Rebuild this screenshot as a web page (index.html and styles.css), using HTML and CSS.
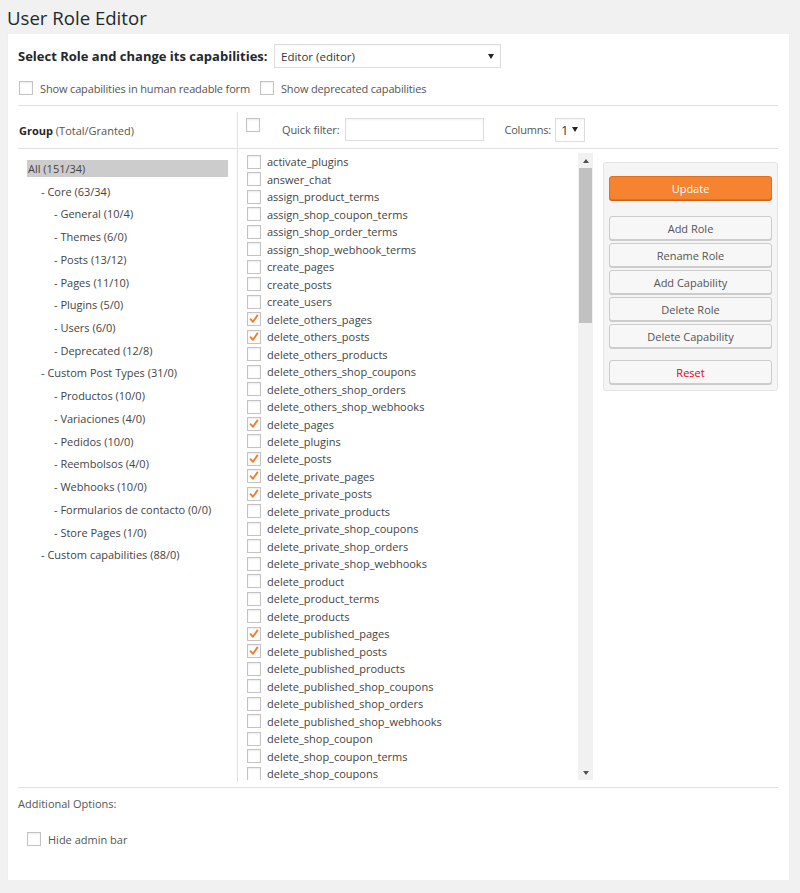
FILE: index.html
```html
<!DOCTYPE html>
<html>
<head>
<meta charset="utf-8">
<title>User Role Editor</title>
<link rel="stylesheet" href="styles.css">
</head>
<body>
<h1 class="title">User Role Editor</h1>
<div class="panel">
  <div class="role-row">
    <span class="role-label">Select Role and change its capabilities:</span>
    <div class="select role-select"><span>Editor (editor)</span><i class="caret"></i></div>
  </div>
  <div class="opts-row">
    <label class="opt"><span class="cb"></span>Show capabilities in human readable form</label>
    <label class="opt"><span class="cb"></span>Show deprecated capabilities</label>
  </div>
  <div class="grid">
    <div class="hdr-left"><div class="hdr-left-in"><b>Group</b>&nbsp;(Total/Granted)</div></div>
    <div class="hdr-right">
      <span class="cb hdr-cb"></span>
      <span class="qf-label">Quick filter:</span>
      <div class="input"></div>
      <span class="col-label">Columns:</span>
      <div class="select col-select"><span>1</span><i class="caret"></i></div>
    </div>
    <div class="body-left">
      <ul class="groups">
        <li class="g0 active">All (151/34)</li>
        <li class="g1">- Core (63/34)</li>
        <li class="g2">- General (10/4)</li>
        <li class="g2">- Themes (6/0)</li>
        <li class="g2">- Posts (13/12)</li>
        <li class="g2">- Pages (11/10)</li>
        <li class="g2">- Plugins (5/0)</li>
        <li class="g2">- Users (6/0)</li>
        <li class="g2">- Deprecated (12/8)</li>
        <li class="g1">- Custom Post Types (31/0)</li>
        <li class="g2">- Productos (10/0)</li>
        <li class="g2">- Variaciones (4/0)</li>
        <li class="g2">- Pedidos (10/0)</li>
        <li class="g2">- Reembolsos (4/0)</li>
        <li class="g2">- Webhooks (10/0)</li>
        <li class="g2">- Formularios de contacto (0/0)</li>
        <li class="g2">- Store Pages (1/0)</li>
        <li class="g1">- Custom capabilities (88/0)</li>
      </ul>
    </div>
    <div class="body-right">
      <div class="caps-box">
        <ul class="caps">
          <li><span class="cb"></span>activate_plugins</li>
          <li><span class="cb"></span>answer_chat</li>
          <li><span class="cb"></span>assign_product_terms</li>
          <li><span class="cb"></span>assign_shop_coupon_terms</li>
          <li><span class="cb"></span>assign_shop_order_terms</li>
          <li><span class="cb"></span>assign_shop_webhook_terms</li>
          <li><span class="cb"></span>create_pages</li>
          <li><span class="cb"></span>create_posts</li>
          <li><span class="cb"></span>create_users</li>
          <li><span class="cb on"><svg viewBox="0 0 14 14"><path d="M3 7.2 L5.8 10.2 L11 2.8"/></svg></span>delete_others_pages</li>
          <li><span class="cb on"><svg viewBox="0 0 14 14"><path d="M3 7.2 L5.8 10.2 L11 2.8"/></svg></span>delete_others_posts</li>
          <li><span class="cb"></span>delete_others_products</li>
          <li><span class="cb"></span>delete_others_shop_coupons</li>
          <li><span class="cb"></span>delete_others_shop_orders</li>
          <li><span class="cb"></span>delete_others_shop_webhooks</li>
          <li><span class="cb on"><svg viewBox="0 0 14 14"><path d="M3 7.2 L5.8 10.2 L11 2.8"/></svg></span>delete_pages</li>
          <li><span class="cb"></span>delete_plugins</li>
          <li><span class="cb on"><svg viewBox="0 0 14 14"><path d="M3 7.2 L5.8 10.2 L11 2.8"/></svg></span>delete_posts</li>
          <li><span class="cb on"><svg viewBox="0 0 14 14"><path d="M3 7.2 L5.8 10.2 L11 2.8"/></svg></span>delete_private_pages</li>
          <li><span class="cb on"><svg viewBox="0 0 14 14"><path d="M3 7.2 L5.8 10.2 L11 2.8"/></svg></span>delete_private_posts</li>
          <li><span class="cb"></span>delete_private_products</li>
          <li><span class="cb"></span>delete_private_shop_coupons</li>
          <li><span class="cb"></span>delete_private_shop_orders</li>
          <li><span class="cb"></span>delete_private_shop_webhooks</li>
          <li><span class="cb"></span>delete_product</li>
          <li><span class="cb"></span>delete_product_terms</li>
          <li><span class="cb"></span>delete_products</li>
          <li><span class="cb on"><svg viewBox="0 0 14 14"><path d="M3 7.2 L5.8 10.2 L11 2.8"/></svg></span>delete_published_pages</li>
          <li><span class="cb on"><svg viewBox="0 0 14 14"><path d="M3 7.2 L5.8 10.2 L11 2.8"/></svg></span>delete_published_posts</li>
          <li><span class="cb"></span>delete_published_products</li>
          <li><span class="cb"></span>delete_published_shop_coupons</li>
          <li><span class="cb"></span>delete_published_shop_orders</li>
          <li><span class="cb"></span>delete_published_shop_webhooks</li>
          <li><span class="cb"></span>delete_shop_coupon</li>
          <li><span class="cb"></span>delete_shop_coupon_terms</li>
          <li><span class="cb"></span>delete_shop_coupons</li>
        </ul>
        <div class="scrollbar">
          <div class="sb-btn"><i class="tri-up"></i></div>
          <div class="sb-track"><div class="sb-thumb"></div></div>
          <div class="sb-btn"><i class="tri-down"></i></div>
        </div>
      </div>
      <div class="actions">
        <button class="btn primary">Update</button>
        <div class="btn-group">
          <button class="btn">Add Role</button>
          <button class="btn">Rename Role</button>
          <button class="btn">Add Capability</button>
          <button class="btn">Delete Role</button>
          <button class="btn">Delete Capability</button>
        </div>
        <button class="btn reset">Reset</button>
      </div>
    </div>
  </div>
  <div class="additional">
    <div class="add-title">Additional Options:</div>
    <label class="opt add-opt"><span class="cb"></span>Hide admin bar</label>
  </div>
</div>
</body>
</html>
```
FILE: styles.css
```css
html, body {
  margin: 0;
  padding: 0;
  background: #f1f1f1;
}
body {
  font-family: "Open Sans", "Noto Sans", sans-serif;
  font-size: 11px;
  color: #444;
}
.title {
  margin: 0;
  height: 34px;
  line-height: 36px;
  padding-left: 7px;
  font-size: 18.6px;
  font-weight: 400;
  color: #23282d;
}
.panel {
  width: 781px;
  height: 846px;
  margin-left: 8px;
  box-sizing: border-box;
  background: #fff;
  padding: 10px 11px 0 10px;
  box-shadow: 0 1px 1px rgba(0,0,0,0.06);
}
.role-row {
  display: flex;
  align-items: center;
  height: 24px;
}
.role-label {
  font-weight: 700;
  font-size: 13px;
  color: #23282d;
  width: 256px;
  white-space: nowrap;
}
.select {
  box-sizing: border-box;
  height: 24px;
  border: 1px solid #ddd;
  background: #fff;
  display: flex;
  align-items: center;
  justify-content: space-between;
  color: #32373c;
  box-shadow: inset 0 1px 2px rgba(0,0,0,0.04);
}
.role-select {
  width: 227px;
  padding: 0 6px 0 6px;
  font-size: 11.5px;
}
.caret {
  width: 0;
  height: 0;
  border-left: 3px solid transparent;
  border-right: 3px solid transparent;
  border-top: 5px solid #222;
}
.opts-row {
  display: flex;
  align-items: center;
  height: 14px;
  margin-top: 13px;
  padding-left: 1px;
  letter-spacing: -0.15px;
}
.opt {
  display: flex;
  align-items: center;
  color: #555;
}
.opt + .opt {
  margin-left: 10px;
}
.cb {
  box-sizing: border-box;
  width: 14px;
  height: 14px;
  border: 1px solid #c3c3c3;
  background: #fff;
  box-shadow: inset 0 1px 2px rgba(0,0,0,0.08);
  flex: none;
  display: inline-flex;
  align-items: center;
  justify-content: center;
  margin-right: 7px;
}
.cb svg {
  width: 14px;
  height: 14px;
}
.cb svg path {
  fill: none;
  stroke: #f07d2c;
  stroke-width: 2.2;
  stroke-linecap: round;
  stroke-linejoin: round;
}
.grid {
  margin-top: 10px;
  border-top: 1px solid #e0e0e0;
  display: grid;
  grid-template-columns: 220px 540px;
  grid-template-rows: 43px 638px;
}
.hdr-left {
  border-bottom: 1px solid #e0e0e0;
}
.hdr-left-in {
  margin-top: 6px;
  height: 36px;
  border-right: 1px solid #e0e0e0;
  display: flex;
  align-items: center;
  padding-left: 1px;
  color: #555;
}
.hdr-left-in b {
  color: #23282d;
}
.hdr-right {
  box-sizing: border-box;
  border-bottom: 1px solid #e0e0e0;
  padding: 5px 0 0 8px;
  display: flex;
  align-items: center;
}
.hdr-cb {
  align-self: flex-start;
  margin-top: 7px;
  margin-right: 22px;
}
.qf-label {
  color: #555;
  margin-right: 6px;
  letter-spacing: -0.1px;
}
.input {
  box-sizing: border-box;
  width: 139px;
  height: 23px;
  border: 1px solid #ddd;
  box-shadow: inset 0 1px 2px rgba(0,0,0,0.05);
}
.col-label {
  margin-left: 20px;
  margin-right: 4px;
  color: #555;
  letter-spacing: -0.2px;
}
.col-select {
  width: 30px;
  height: 24px;
  padding: 0 6px 0 5px;
  font-size: 13px;
}
.body-left {
  border-right: 1px solid #e0e0e0;
  margin-bottom: 5px;
  padding: 11px 9px 0 9px;
}
.groups {
  list-style: none;
  margin: 0;
  padding: 0;
}
.groups li {
  height: 17px;
  line-height: 17px;
  margin-bottom: 5.72px;
  white-space: nowrap;
  color: #444;
}
.groups .g0 { padding-left: 1px; }
.groups .g1 { padding-left: 14px; }
.groups .g2 { padding-left: 27px; }
.groups .active {
  background: #cccccc;
}
.body-right {
  display: flex;
  align-items: flex-start;
  padding: 4px 0 0 7px;
}
.caps-box {
  width: 348px;
  height: 627px;
  display: flex;
  overflow: hidden;
}
.caps {
  list-style: none;
  margin: 0;
  padding: 0 0 0 2px;
  flex: 1;
  overflow: hidden;
}
.caps li {
  height: 17.49px;
  display: flex;
  align-items: center;
  white-space: nowrap;
  color: #444;
}
.caps .cb {
  margin-right: 6px;
}
.scrollbar {
  width: 15px;
  flex: none;
  background: #f1f1f1;
  display: flex;
  flex-direction: column;
}
.sb-btn {
  height: 15px;
  display: flex;
  align-items: center;
  justify-content: center;
}
.tri-up {
  width: 0; height: 0;
  border-left: 3px solid transparent;
  border-right: 3px solid transparent;
  border-bottom: 4px solid #505050;
}
.tri-down {
  width: 0; height: 0;
  border-left: 3px solid transparent;
  border-right: 3px solid transparent;
  border-top: 4px solid #505050;
}
.sb-track {
  flex: 1;
  padding: 0 1px;
}
.sb-thumb {
  height: 155px;
  background: #c1c1c1;
}
.actions {
  margin-left: 10px;
  margin-top: 9px;
  width: 175px;
  box-sizing: border-box;
  background: #f5f5f5;
  border: 1px solid #e3e3e3;
  border-radius: 3px;
  padding: 13px 5px 6px 5px;
  display: flex;
  flex-direction: column;
}
.btn {
  box-sizing: border-box;
  height: 24px;
  width: 100%;
  border: 1px solid #ccc;
  border-radius: 3px;
  background: #f7f7f7;
  box-shadow: 0 1px 0 #cccccc;
  font-family: "Open Sans", "Noto Sans", sans-serif;
  font-size: 11px;
  color: #555;
  padding: 0;
  margin: 0;
}
.btn.primary {
  background: #f5832f;
  border-color: #e26f1c;
  box-shadow: 0 1px 0 #c9621a;
  color: #fff;
}
.btn-group {
  margin-top: 16px;
  display: flex;
  flex-direction: column;
  gap: 3px;
}
.btn.reset {
  margin-top: 12px;
  color: #e00;
}
.additional {
  border-top: 1px solid #e0e0e0;
  padding-top: 8px;
}
.add-title {
  height: 16px;
  line-height: 16px;
  color: #555;
}
.add-opt {
  margin-top: 20px;
  margin-left: 9px;
  height: 14px;
}
```
